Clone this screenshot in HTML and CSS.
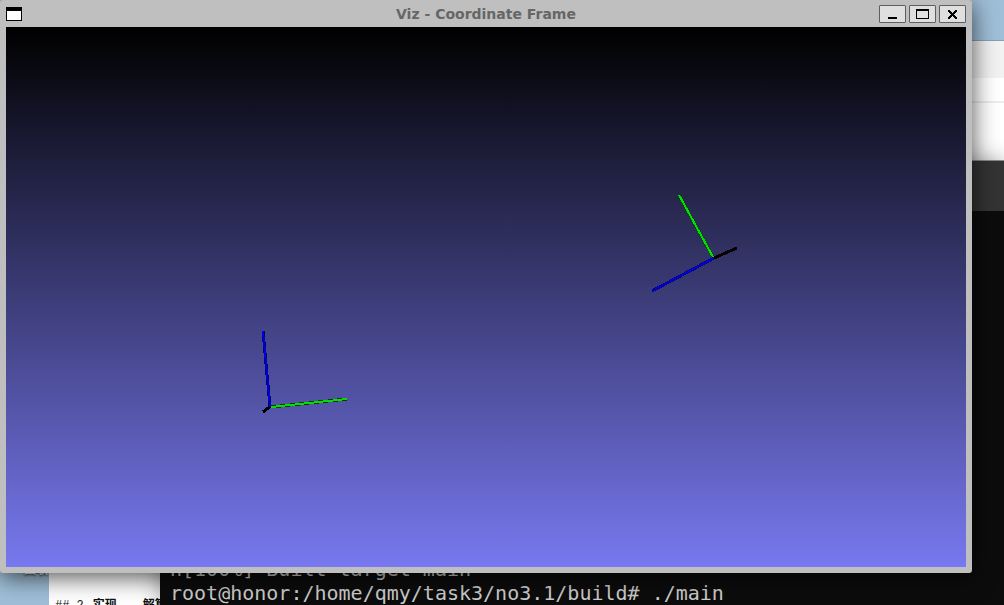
FILE: index.html
```html
<!DOCTYPE html>
<html lang="en">
<head>
<meta charset="utf-8">
<title>Viz - Coordinate Frame</title>
<link rel="stylesheet" href="styles.css">
</head>
<body>
<main class="desktop">
  <span class="desktop-label">回收</span>

  <section class="editor" aria-label="Editor">
    <div class="editor-tabs"></div>
    <div class="editor-tools"></div>
    <div class="editor-page">
      <p class="editor-line"><span class="editor-mark">## 2</span><b>实现</b><b class="editor-next">解算</b></p>
    </div>
  </section>

  <section class="terminal" aria-label="Terminal">
    <div class="terminal-tabs"></div>
    <div class="terminal-output">
      <p class="terminal-line">n[100%] Built target main</p>
      <p class="terminal-line">root@honor:/home/qmy/task3/no3.1/build# ./main</p>
    </div>
  </section>

  <section class="viewer" aria-label="Viz - Coordinate Frame">
    <header class="titlebar">
      <svg class="app-icon" width="16" height="14" viewBox="0 0 16 14" shape-rendering="crispEdges" aria-hidden="true">
        <path fill="#000" d="M0 0h16v14H0z"/><path fill="#fff" d="M1 4h14v9H1z"/>
      </svg>
      <h1 class="title">Viz - Coordinate Frame</h1>
      <div class="controls">
        <button class="control" type="button" aria-label="Minimize">
          <svg width="25" height="16" viewBox="0 0 25 16" shape-rendering="crispEdges"><path d="M8 11h9v2H8z"/></svg>
        </button>
        <button class="control" type="button" aria-label="Maximize">
          <svg width="25" height="16" viewBox="0 0 25 16" shape-rendering="crispEdges"><path fill-rule="evenodd" d="M6 3h13v10H6zM7 5v7h11V5z"/></svg>
        </button>
        <button class="control" type="button" aria-label="Close">
          <svg width="25" height="16" viewBox="0 0 25 16" shape-rendering="crispEdges"><path d="M8 4h2v1h1v1h1v1h1V6h1V5h1V4h2v2h-1v1h-1v1h-1v1h1v1h1v1h1v2h-2v-1h-1v-1h-1v-1h-1v1h-1v1h-1v1H8v-2h1v-1h1V9h1V8h-1V7H9V6H8z"/></svg>
        </button>
      </div>
    </header>
    <svg class="scene" viewBox="0 0 960 540" preserveAspectRatio="none" shape-rendering="crispEdges" role="img" aria-label="Two coordinate frames">
      <g fill="none" stroke-width="3">
        <path stroke="#000064" d="M264 380L257 304"/>
        <path stroke="#003c00" d="M265 380L341 372"/>
        <path stroke="#000" d="M265 379L257 385"/>
        <path stroke="#0a0000" d="M708 231L731 221"/>
        <path stroke="#000064" d="M708 231L646 264"/>
        <path stroke="#005000" d="M707 230L673 168"/>
      </g>
      <g fill="none" stroke-width="2">
        <path stroke="#0000d8" d="M264 380L257 304M708 231L646 264"/>
        <path stroke="#00e000" d="M265 380L341 372M707 230L673 168"/>
      </g>
    </svg>
  </section>
</main>
</body>
</html>
```
FILE: styles.css
```css
* { box-sizing: border-box; }

body {
  margin: 0;
  font-family: "DejaVu Sans", sans-serif;
}

h1, p { margin: 0; }

.desktop {
  position: relative;
  height: 100vh;
  overflow: hidden;
  background: #9fbfd8;
}

.desktop-label {
  position: absolute;
  left: 24px;
  bottom: 28px;
  font: 12px/16px "Noto Sans CJK SC", sans-serif;
  color: #fff;
  text-shadow: 0 1px 2px #000;
}

.editor,
.terminal,
.viewer {
  position: absolute;
  display: flex;
  flex-direction: column;
}

.editor {
  inset: 40px 0 0 49px;
  background: #fff;
  border-top: 1px solid #87a2b6;
}

.editor-tabs { height: 37px; background: #f2f2f2; }

.editor-tools { height: 25px; border-bottom: 2px solid #ececec; }

.editor-page {
  flex: 1;
  display: flex;
  align-items: flex-end;
  padding-left: 6px;
}

.editor-line {
  display: flex;
  height: 7px;
  font: 12px/16px "Liberation Mono", "Noto Sans CJK SC", monospace;
  white-space: pre;
  color: #111;
}

.editor-mark { padding-right: 9px; }

.editor-next { padding-left: 26px; }

.terminal {
  inset: 160px 0 0 160px;
  background: #0c0c0c;
  border-top: 1px solid #888;
  box-shadow: 0 0 20px rgba(0, 0, 0, 0.35);
}

.terminal-tabs { height: 50px; background: #333; }

.terminal-output {
  flex: 1;
  display: flex;
  flex-direction: column;
  justify-content: flex-end;
  padding-left: 10px;
}

.terminal-line {
  font: 20px/24px "DejaVu Sans Mono", monospace;
  white-space: pre;
  color: #ccc;
}

.viewer {
  inset: 0 32px 32px 0;
  padding: 0 6px 6px;
  background: #bfbfbf;
  border-radius: 3px;
  box-shadow: 0 4px 24px rgba(0, 0, 0, 0.7);
}

.titlebar {
  display: grid;
  grid-template-columns: 1fr auto 1fr;
  align-items: center;
  height: 27px;
}

.title {
  font-size: 14px;
  line-height: 16px;
  font-weight: bold;
  color: #666;
}

.controls {
  display: flex;
  justify-content: flex-end;
  gap: 3px;
}

.control {
  display: block;
  width: 27px;
  height: 18px;
  padding: 0;
  border: 1px solid #5e5e5e;
  border-radius: 1px;
  background: #dfdfdf;
}

.control svg { display: block; }

.scene {
  flex: 1;
  min-height: 0;
  width: 100%;
  background: linear-gradient(#000, #7878f0);
}
```
